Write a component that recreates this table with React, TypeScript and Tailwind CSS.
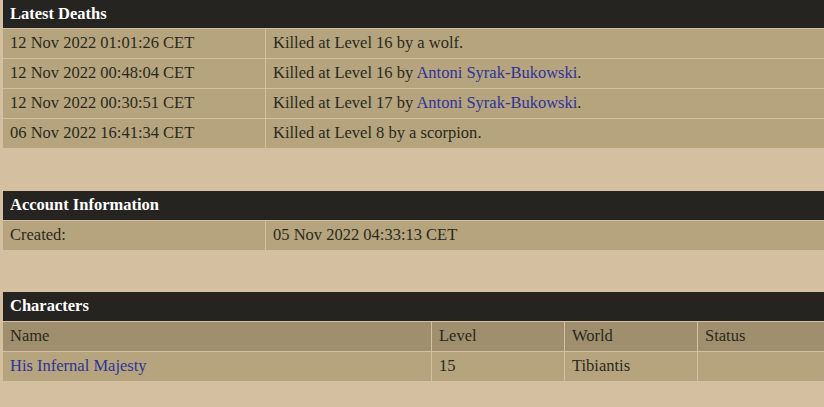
const font = { fontFamily: '"Liberation Serif", "DejaVu Serif", serif' };

function Header({ title, first }: { title: string; first?: boolean }) {
  return (
    <div
      className={`flex items-center bg-[#262420] px-[7px] text-[16.5px] font-bold text-white ${first ? 'h-[28px]' : 'h-[29px]'}`}
    >
      {title}
    </div>
  );
}

function Link({ children }: { children: React.ReactNode }) {
  return <a className="text-[#2f3399]">{children}</a>;
}

const deaths = [
  { date: '12 Nov 2022 01:01:26 CET', level: 16, by: 'a wolf', player: false },
  { date: '12 Nov 2022 00:48:04 CET', level: 16, by: 'Antoni Syrak-Bukowski', player: true },
  { date: '12 Nov 2022 00:30:51 CET', level: 17, by: 'Antoni Syrak-Bukowski', player: true },
  { date: '06 Nov 2022 16:41:34 CET', level: 8, by: 'a scorpion', player: false },
];

export default function App() {
  return (
    <div className="min-h-[407px] bg-[#d4c0a1] pl-[3px] text-[16.5px] text-[#2a2a1c]" style={font}>
      {/* Latest Deaths */}
      <div>
        <Header title="Latest Deaths" first />
        {deaths.map((d) => (
          <div key={d.date} className="grid h-[30px] grid-cols-[262px_1fr] border-t border-[#d4c0a1] bg-[#b5a47e]">
            <div className="flex items-center px-[7px]">{d.date}</div>
            <div className="flex items-center border-l border-[#d4c0a1] px-[7px]">
              <span>
                Killed at Level {d.level} by {d.player ? <Link>{d.by}</Link> : d.by}.
              </span>
            </div>
          </div>
        ))}
      </div>

      {/* Account Information */}
      <div className="mt-[43px]">
        <Header title="Account Information" />
        <div className="grid h-[30px] grid-cols-[262px_1fr] border-t border-[#d4c0a1] bg-[#b5a47e]">
          <div className="flex items-center px-[7px]">Created:</div>
          <div className="flex items-center border-l border-[#d4c0a1] px-[7px]">05 Nov 2022 04:33:13 CET</div>
        </div>
      </div>

      {/* Characters */}
      <div className="mt-[42px]">
        <Header title="Characters" />
        <div className="grid h-[30px] grid-cols-[428px_133px_133px_1fr] border-t border-[#d4c0a1] bg-[#9f8f6e]">
          <div className="flex items-center px-[7px]">Name</div>
          <div className="flex items-center border-l border-[#d4c0a1] px-[7px]">Level</div>
          <div className="flex items-center border-l border-[#d4c0a1] px-[7px]">World</div>
          <div className="flex items-center border-l border-[#d4c0a1] px-[7px]">Status</div>
        </div>
        <div className="grid h-[30px] grid-cols-[428px_133px_133px_1fr] border-t border-[#d4c0a1] bg-[#b5a47e]">
          <div className="flex items-center px-[7px]">
            <Link>His Infernal Majesty</Link>
          </div>
          <div className="flex items-center border-l border-[#d4c0a1] px-[7px]">15</div>
          <div className="flex items-center border-l border-[#d4c0a1] px-[7px]">Tibiantis</div>
          <div className="flex items-center border-l border-[#d4c0a1] px-[7px]"></div>
        </div>
      </div>
    </div>
  );
}
